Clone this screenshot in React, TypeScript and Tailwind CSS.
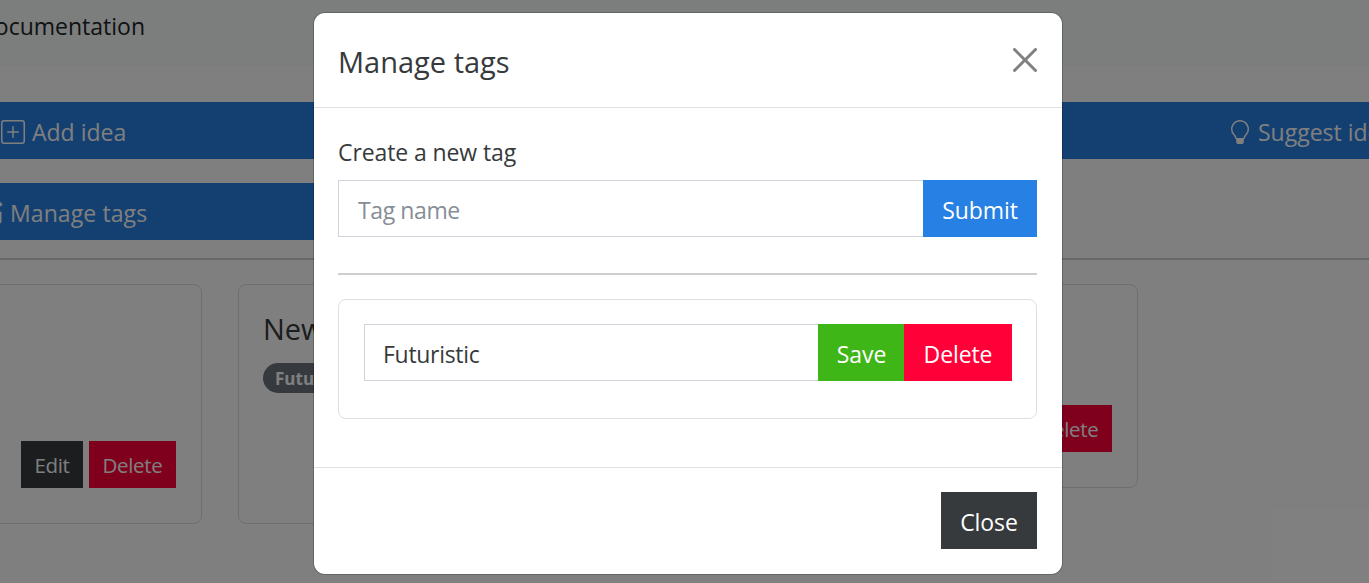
import { BsPencilSquare, BsPlusSquare } from "react-icons/bs";
import type { ReactNode } from "react";

function IdeaCard({ className, children }: { className: string; children?: ReactNode }) {
  return (
    <article
      className={`flex w-[432px] shrink-0 flex-col justify-between rounded-lg border border-[#dfdfdf] pb-[35px] pl-6 pr-[25px] pt-6 ${className}`}
    >
      <div>{children}</div>
      <div className="flex justify-end gap-1.5 text-[20.5px] leading-[48px] text-white">
        <button className="h-[47px] w-[62px] bg-[#373a3c] tracking-[-0.3px]">Edit</button>
        <button className="h-[47px] w-[87px] bg-[#ff0039] tracking-[-0.3px]">Delete</button>
      </div>
    </article>
  );
}

function CloseIcon() {
  return (
    <svg viewBox="0 0 16 16" className="size-6 text-[#808080]" fill="currentColor">
      <path d="M.293.293a1 1 0 0 1 1.414 0L8 6.586 14.293.293a1 1 0 1 1 1.414 1.414L9.414 8l6.293 6.293a1 1 0 0 1-1.414 1.414L8 9.414l-6.293 6.293a1 1 0 0 1-1.414-1.414L6.586 8 .293 1.707a1 1 0 0 1 0-1.414z" />
    </svg>
  );
}

function BulbIcon() {
  return (
    <svg viewBox="0 0 16 16" className="mt-0.5 size-6 shrink-0" fill="currentColor">
      <path d="M2 6a6 6 0 1 1 10.174 4.31c-.203.196-.359.4-.453.619l-.762 1.769A.5.5 0 0 1 10.5 13v2l-.224.447a1 1 0 0 1-.894.553H6.618a1 1 0 0 1-.894-.553L5.5 15v-2a.5.5 0 0 1-.46-.302l-.761-1.77a1.964 1.964 0 0 0-.453-.618A5.984 5.984 0 0 1 2 6zm6-5a5 5 0 0 0-3.479 8.592c.263.254.514.564.676.941L5.83 12h4.342l.632-1.467c.162-.377.413-.687.676-.941A5 5 0 0 0 8 1z" />
    </svg>
  );
}

function Page() {
  return (
    <div className="h-full">
      <nav className="flex h-[66px] bg-[#f8fcfa] text-[#212529]">
        <a className="flex w-[145px] justify-end pt-1 text-[23px] leading-[44px]">Documentation</a>
      </nav>
      <main className="pt-9 text-white">
        <button className="flex h-[57px] w-full items-center overflow-hidden bg-[#2780e3] text-[23px]">
          <span className="flex w-[1228px] shrink-0 items-center">
            <BsPlusSquare className="ml-px mt-0.5 size-6 shrink-0" />
            <span className="ml-[7px] whitespace-nowrap pt-1">Add idea</span>
          </span>
          <BulbIcon />
          <span className="ml-1.5 whitespace-nowrap pt-1">Suggest idea</span>
        </button>
        <button className="mt-6 flex h-[57px] w-[684px] items-center bg-[#2780e3] text-[23px]">
          <BsPencilSquare className="-ml-[21px] mt-0.5 size-6" />
          <span className="ml-[7px] pt-1 tracking-[0.1px]">Manage tags</span>
        </button>
        <hr className="mb-6 mt-[18px] border-t-2 border-[#cdcecf]" />
        <section className="-ml-[230px] flex items-start gap-9 text-[#373a3c]">
          <IdeaCard className="h-[240px]" />
          <IdeaCard className="h-[240px]">
            <h5 className="text-[29px] leading-[40px] text-[#373a3c]">New idea</h5>
            <span className="mt-[14px] inline-block h-[30px] rounded-full bg-[#6c757d] px-3 text-[17px] font-bold leading-[32px] text-white">
              Futuristic
            </span>
          </IdeaCard>
          <IdeaCard className="h-[204px]" />
        </section>
      </main>
    </div>
  );
}

function ManageTagsModal() {
  return (
    <div
      role="dialog"
      className="absolute left-[314px] top-[13px] flex h-[561px] w-[748px] flex-col rounded-[11px] bg-white text-[23px] text-[#373a3c] shadow-[0_0_0_1px_rgba(0,0,0,0.2)]"
    >
      <header className="flex h-[95px] items-center justify-between border-b border-[#dee2e6] pl-6 pr-[25px]">
        <h5 className="pt-1 text-[29px]">Manage tags</h5>
        <CloseIcon />
      </header>
      <div className="flex-1 pl-6 pr-[25px] pt-6">
        <label className="block h-12 leading-[40px] tracking-[-0.1px]">Create a new tag</label>
        <div className="flex h-[57px]">
          <input
            className="min-w-0 flex-1 border border-r-0 border-[#ced4da] pl-[19px] pt-1 tracking-[-0.4px] outline-none placeholder:text-[#868e96]"
            placeholder="Tag name"
          />
          <button className="w-[114px] bg-[#2780e3] pt-1 tracking-[-0.1px] text-white">Submit</button>
        </div>
        <hr className="mb-6 mt-9 border-t-2 border-[#cdcecf]" />
        <div className="h-[120px] rounded-lg border border-[#dfdfdf] pl-[25px] pr-6 pt-6">
          <div className="flex h-[57px]">
            <input
              className="min-w-0 flex-1 border border-r-0 border-[#ced4da] pl-[18px] pt-1 tracking-[-0.3px] outline-none"
              defaultValue="Futuristic"
            />
            <button className="w-[86px] bg-[#3fb618] pl-px pt-1 tracking-[-0.1px] text-white">Save</button>
            <button className="w-[108px] bg-[#ff0039] pt-1 tracking-[-0.1px] text-white">Delete</button>
          </div>
        </div>
      </div>
      <footer className="flex h-[107px] justify-end border-t border-[#dee2e6] pl-6 pr-[25px] pt-6">
        <button className="h-[57px] w-24 bg-[#373a3c] pt-1 tracking-[-0.1px] text-white">Close</button>
      </footer>
    </div>
  );
}

export default function App() {
  return (
    <div className="relative h-[583px] w-full overflow-hidden bg-white font-['Open_Sans',sans-serif]">
      <Page />
      <div className="absolute inset-0 bg-black/50" />
      <ManageTagsModal />
    </div>
  );
}
